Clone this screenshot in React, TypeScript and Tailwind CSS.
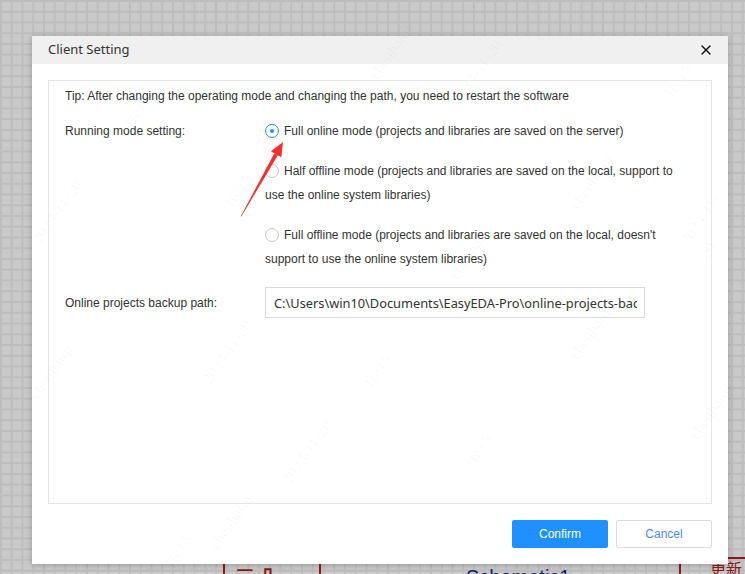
import { X } from "lucide-react";

const marks = [
  { t: "chenhaiqi", x: 360, y: 40 },
  { t: "2023-11-20", x: 440, y: 60 },
  { t: "16:15", x: 660, y: 70 },
  { t: "16:15", x: 120, y: 100 },
  { t: "2023-11-20", x: 20, y: 200 },
  { t: "16:15", x: 220, y: 180 },
  { t: "chenhaiqi", x: 560, y: 170 },
  { t: "2023-11-20", x: 680, y: 200 },
  { t: "chenhaiqi", x: 440, y: 240 },
  { t: "2023-11-20", x: 190, y: 340 },
  { t: "16:15", x: 360, y: 360 },
  { t: "chenhaiqi", x: 560, y: 320 },
  { t: "chenhaiqi", x: 20, y: 360 },
  { t: "2023-11-20", x: 270, y: 440 },
  { t: "16:15", x: 460, y: 440 },
  { t: "chenhaiqi", x: 680, y: 400 },
  { t: "chenhaiqi", x: 200, y: 510 },
  { t: "16:15", x: 160, y: 540 },
];

function Radio({ checked }: { checked?: boolean }) {
  return (
    <span
      className={`inline-flex h-[14px] w-[14px] shrink-0 items-center justify-center rounded-full border bg-white ${
        checked ? "border-[#1e90ff]" : "border-[#c8c8c8]"
      }`}
    >
      {checked && <span className="h-[4px] w-[4px] rounded-full bg-[#1e90ff]" />}
    </span>
  );
}

export default function App() {
  return (
    <div
      className="relative h-[574px] w-[745px] overflow-hidden bg-[#c9c9c9] bg-[linear-gradient(to_right,#bdbdbd_2px,transparent_2px),linear-gradient(to_bottom,#bdbdbd_2px,transparent_2px)] bg-[size:10.75px_10.75px] pt-9 pl-8 text-[12px] text-[#333] [font-family:'Liberation_Sans',Arial,sans-serif]"
    >
      {/* schematic behind the dialog */}
      <div className="absolute left-[223px] top-[556px] h-[30px] w-[98px] border-x-2 border-[#8b1a1a]" />
      <div className="absolute left-[236px] top-[568px] text-[18px] font-bold leading-none text-[#8b1a1a]">三 几</div>
      <div className="absolute left-[466px] top-[567px] text-[20px] leading-none text-[#1a1a6b]">Schematic1</div>
      <div className="absolute left-[679px] top-[556px] h-[30px] w-[2px] bg-[#8b1a1a]" />
      <div className="absolute left-[712px] top-[557px] h-[2px] w-[33px] bg-[#8b1a1a]" />
      <div className="absolute left-[710px] top-[560px] text-[16px] leading-none text-[#8b1a1a] [font-family:'Noto_Sans_CJK_SC',sans-serif]">更新</div>

      {/* dialog */}
      <div className="relative flex h-[528px] w-[696px] flex-col bg-white shadow-[0_1px_6px_rgba(0,0,0,0.25)]">
        <div className="flex h-7 items-center justify-between bg-[#f0f0f0] pl-4 pr-[14px]">
          <span className="text-[13px] text-[#333] [font-family:'Noto_Sans',sans-serif]">Client Setting</span>
          <X size={16} strokeWidth={2} className="text-[#111]" />
        </div>

        <div className="flex flex-1 flex-col px-4 pt-4 pb-4">
          <div className="h-[424px] border border-[#e5e5e5] pl-4 pt-[7px]">
            <p className="leading-4">
              Tip: After changing the operating mode and changing the path, you need to restart the software
            </p>

            <div className="mt-[15px] grid grid-cols-[200px_1fr] leading-6">
              <div>Running mode setting:</div>
              <div className="flex flex-col gap-4">
                <div className="flex items-center gap-[5px]">
                  <Radio checked />
                  <span>Full online mode (projects and libraries are saved on the server)</span>
                </div>
                <div>
                  <div className="flex items-center gap-[5px]">
                    <Radio />
                    <span className="whitespace-nowrap">
                      Half offline mode (projects and libraries are saved on the local, support to
                    </span>
                  </div>
                  <div>use the online system libraries)</div>
                </div>
                <div>
                  <div className="flex items-center gap-[5px]">
                    <Radio />
                    <span className="whitespace-nowrap">
                      Full offline mode (projects and libraries are saved on the local, doesn't
                    </span>
                  </div>
                  <div>support to use the online system libraries)</div>
                </div>
              </div>

              <div className="mt-4 flex h-[31px] items-center">Online projects backup path:</div>
              <div className="mt-4">
                <div className="flex h-[31px] w-[380px] items-center border border-[#d9d9d9] pl-2 pr-[7px] text-[12.8px] text-[#333] [font-family:'Noto_Sans',sans-serif]">
                  <span className="overflow-hidden whitespace-nowrap">
                    C:\Users\win10\Documents\EasyEDA-Pro\online-projects-backup
                  </span>
                </div>
              </div>
            </div>
          </div>

          <div className="mt-4 flex justify-end gap-2">
            <button className="h-7 w-24 rounded-[2px] bg-[#1e90ff] text-[12px] text-white">Confirm</button>
            <button className="h-7 w-24 rounded-[2px] border border-[#dcdcdc] bg-white text-[12px] text-[#4a8cff]">
              Cancel
            </button>
          </div>
        </div>
      </div>

      {/* watermark */}
      <div className="pointer-events-none absolute inset-0">
        {marks.map((m, i) => (
          <span
            key={i}
            className="absolute -rotate-[55deg] text-[16px] text-black/[0.035] [font-family:'Liberation_Serif',serif]"
            style={{ left: m.x, top: m.y }}
          >
            {m.t}
          </span>
        ))}
      </div>

      {/* annotation arrow */}
      <svg className="pointer-events-none absolute left-0 top-0" width="745" height="574" viewBox="0 0 745 574">
        <polygon points="240.8,216.3 241.3,216.6 277.8,155.2 274.4,153.2" fill="#ff2a2a" />
        <polygon points="283,142 270.9,151.2 281.3,157.2" fill="#ff2a2a" />
      </svg>
    </div>
  );
}
